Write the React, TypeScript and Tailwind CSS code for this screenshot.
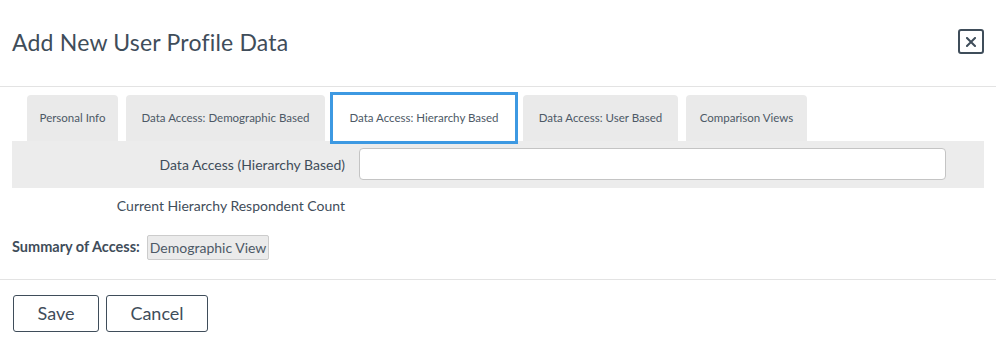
const tabs = [
  { label: "Personal Info", width: "w-[91px]" },
  { label: "Data Access: Demographic Based", width: "w-[199px]" },
  { label: "Data Access: Hierarchy Based", width: "w-[182px]", active: true },
  { label: "Data Access: User Based", width: "w-[155px]" },
  { label: "Comparison Views", width: "w-[121px]" },
];

export default function App() {
  return (
    <div className="w-[996px] h-[345px] bg-white text-[#3f4d5a] font-['Lato',sans-serif]">
      {/* header */}
      <div className="h-[87px] flex items-center justify-between pl-3 pr-3 border-b border-[#e3e3e3]">
        <h1 className="text-[23px] font-normal tracking-[0.2px] -mt-[1px]">Add New User Profile Data</h1>
        <button className="w-[26px] h-[25px] border-2 border-[#3f4d5a] rounded-[3px] flex items-center justify-center -mt-[3px]">
          <svg width="10" height="10" viewBox="0 0 10 10">
            <path d="M1 1 L9 9 M9 1 L1 9" stroke="#3f4d5a" strokeWidth="2" strokeLinecap="square" />
          </svg>
        </button>
      </div>

      {/* tabs */}
      <div className="flex gap-2 pl-[27px] pt-2">
        {tabs.map((t) =>
          t.active ? (
            <div
              key={t.label}
              className={`${t.width} h-[46px] bg-white flex items-center justify-center text-[11.5px] text-[#4d5966] outline-[3px] outline-solid outline-[#3d99e2] relative z-10`}
            >
              {t.label}
            </div>
          ) : (
            <div
              key={t.label}
              className={`${t.width} h-[46px] bg-[#eaeaea] rounded-t-[4px] flex items-center justify-center text-[11.5px] text-[#4d5966]`}
            >
              {t.label}
            </div>
          )
        )}
      </div>

      {/* form */}
      <div className="mx-3 h-[47px] bg-[#ececec] flex items-center">
        <div className="w-[333px] text-right text-[14px]">Data Access (Hierarchy Based)</div>
        <input className="ml-[14px] w-[587px] h-[32px] bg-white border border-[#c4c4c4] rounded-[4px] mt-[-1px]" />
      </div>
      <div className="mx-3 h-[35px] flex items-center">
        <div className="w-[333px] text-right text-[14px] -mt-[1px]">Current Hierarchy Respondent Count</div>
      </div>
      <div className="px-3 h-[56px] pb-[8px] flex items-center gap-[7px]">
        <span className="text-[14.5px] font-bold">Summary of Access:</span>
        <span className="h-[25px] px-[2px] flex items-center bg-[#ebebeb] border border-[#cccccc] rounded-[2px] text-[14px] text-[#4d5966]">
          Demographic View
        </span>
      </div>

      {/* footer */}
      <div className="border-t border-[#e3e3e3] flex gap-[7px] pl-[13px] pt-[15px]">
        <button className="w-[86px] h-[37px] border border-[#3f4d5a] rounded-[3px] text-[18px]">Save</button>
        <button className="w-[102px] h-[37px] border border-[#3f4d5a] rounded-[3px] text-[18px]">Cancel</button>
      </div>
    </div>
  );
}
